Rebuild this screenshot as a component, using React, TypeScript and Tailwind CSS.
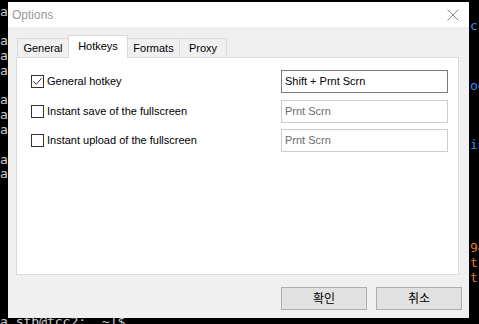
import React from "react";

const termLines: { left?: string; right?: string; rightColor?: string }[] = [
  { left: "a" },
  { right: "cl", rightColor: "text-[#3b8eea]" },
  { left: "a" },
  { left: "a" },
  { left: "a" },
  { right: "og", rightColor: "text-[#3b8eea]" },
  { left: "a" },
  { left: "a" },
  { left: "a" },
  { right: "in", rightColor: "text-[#3b8eea]" },
  { left: "a" },
  { left: "a" },
  {},
  {},
  {},
  {},
  { right: "94", rightColor: "text-[#e2762f]" },
  { right: "t-", rightColor: "text-[#e2762f]" },
  { right: "t-", rightColor: "text-[#e2762f]" },
  {},
  {},
  { left: "a stb@tcc2:  ~]$" },
];

const rows = [
  { label: "General hotkey", value: "Shift + Prnt Scrn", checked: true, active: true },
  { label: "Instant save of the fullscreen", value: "Prnt Scrn", checked: false, active: false },
  { label: "Instant upload of the fullscreen", value: "Prnt Scrn", checked: false, active: false },
];

const tabs = [
  { name: "General", w: "w-[52px]" },
  { name: "Hotkeys", w: "w-[60px]", selected: true },
  { name: "Formats", w: "w-[53px]" },
  { name: "Proxy", w: "w-[48px]" },
];

function Checkbox({ checked }: { checked: boolean }) {
  return (
    <div className="w-[13px] h-[13px] border border-[#333333] bg-white flex items-center justify-center shrink-0">
      {checked && (
        <svg width="11" height="11" viewBox="0 0 11 11">
          <path d="M1.5 5.5 L4.2 8.3 L9.6 2.2" fill="none" stroke="#333333" strokeWidth="1" />
        </svg>
      )}
    </div>
  );
}

export default function App() {
  return (
    <div className="relative w-[479px] h-[324px] bg-black overflow-hidden">
      {/* terminal behind the dialog */}
      <div className="flex flex-col pt-[4.6px] font-['DejaVu_Sans_Mono',monospace] text-[13px] leading-[14.8px] text-[#cccccc]">
        {termLines.map((l, i) => (
          <div key={i} className="h-[14.8px] flex justify-between whitespace-pre">
            <span>{l.left ?? ""}</span>
            <span className={`w-[9px] overflow-hidden ${l.rightColor ?? ""}`}>{l.right ?? ""}</span>
          </div>
        ))}
      </div>

      {/* dialog window */}
      <div className="absolute left-[8px] top-[2px] w-[461px] h-[316px] bg-[#f0f0f0] flex flex-col font-['Liberation_Sans','Noto_Sans_CJK_KR',sans-serif] text-[11px] text-black">
        <div className="h-[25px] bg-white flex items-center justify-between pl-[4px] pr-[10px]">
          <span className="text-[#999999] text-[12px]">Options</span>
          <svg width="12" height="12" viewBox="0 0 12 12">
            <path d="M0.5 0.5 L11.5 11.5 M11.5 0.5 L0.5 11.5" stroke="#888888" strokeWidth="1" />
          </svg>
        </div>

        <div className="flex-1 flex flex-col pl-[8px] pr-[10px] pt-[8px]">
          <div className="flex items-end h-[22px] pl-[1px]">
            {tabs.map((t, i) =>
              t.selected ? (
                <div
                  key={t.name}
                  className={`${t.w} h-[23px] -mb-px -ml-px bg-white border border-b-0 border-[#d9d9d9] relative z-10 flex items-start justify-center pt-[2px]`}
                >
                  {t.name}
                </div>
              ) : (
                <div
                  key={t.name}
                  className={`${t.w} h-[19px] ${i > 0 ? "-ml-px" : ""} bg-[#f0f0f0] border border-b-0 border-[#d9d9d9] flex items-center justify-center`}
                >
                  {t.name}
                </div>
              )
            )}
          </div>

          <div className="h-[218px] bg-white border border-[#d9d9d9] pl-[14px] pt-[12px]">
            <div className="grid grid-cols-[250px_167px] gap-y-[6.5px]">
              {rows.map((r) => (
                <React.Fragment key={r.label}>
                  <div className="flex items-center gap-[3px] h-[23px]">
                    <Checkbox checked={r.checked} />
                    <span>{r.label}</span>
                  </div>
                  <div
                    className={`h-[23px] border bg-white flex items-center pl-[3px] ${
                      r.active ? "border-[#7a7a7a] text-black" : "border-[#cccccc] text-[#6d6d6d]"
                    }`}
                  >
                    {r.value}
                  </div>
                </React.Fragment>
              ))}
            </div>
          </div>

          <div className="flex justify-end gap-[9px] mt-[12px] -mr-[3px]">
            <button className="w-[86px] h-[23px] bg-[#e1e1e1] border border-[#adadad] flex items-center justify-center text-[12px]">
              확인
            </button>
            <button className="w-[86px] h-[23px] bg-[#e1e1e1] border border-[#adadad] flex items-center justify-center text-[12px]">
              취소
            </button>
          </div>
        </div>
      </div>
    </div>
  );
}
